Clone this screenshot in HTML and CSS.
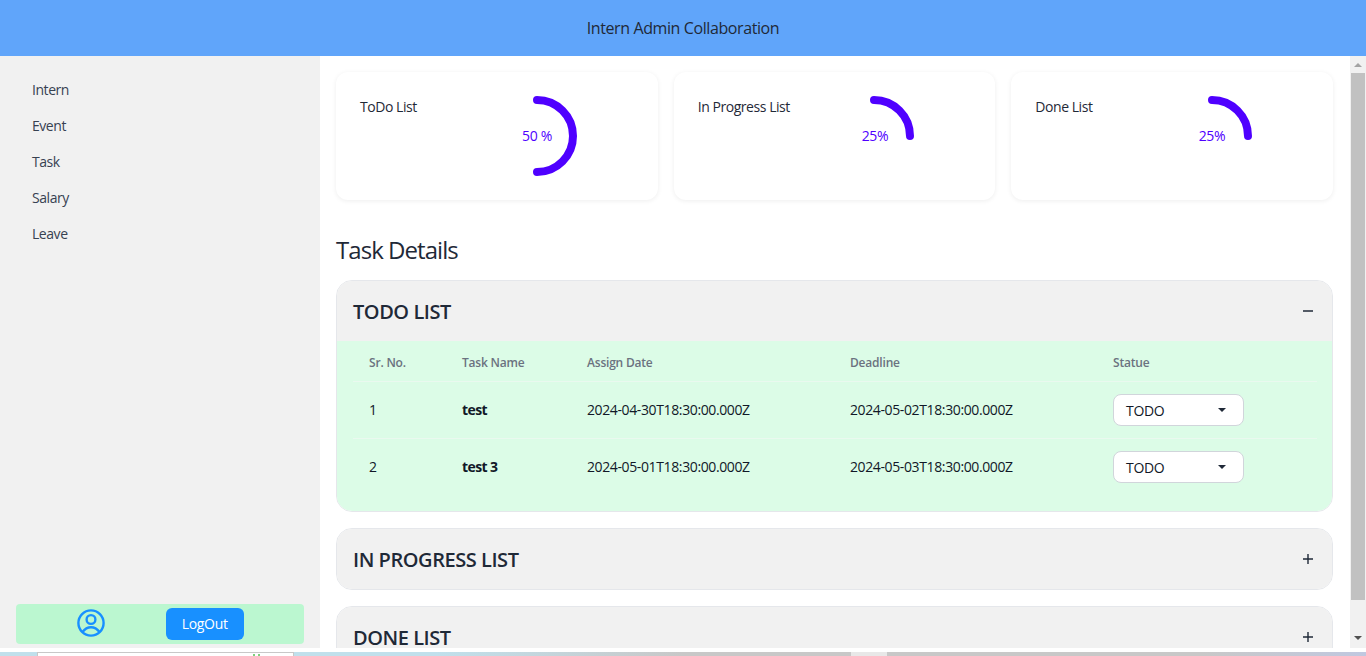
FILE: index.html
```html
<!DOCTYPE html>
<html lang="en">
<head>
  <meta charset="UTF-8">
  <title>Intern Admin Collaboration</title>
  <link rel="stylesheet" href="styles.css">
</head>
<body>

<header class="topbar">Intern Admin Collaboration</header>

<div class="shell">
  <aside class="sidebar">
    <nav class="side-nav">
      <a href="#">Intern</a>
      <a href="#">Event</a>
      <a href="#">Task</a>
      <a href="#">Salary</a>
      <a href="#">Leave</a>
    </nav>
    <div class="side-footer">
      <svg class="profile-icon" viewBox="0 0 28 28" fill="none" stroke="#1890ff" stroke-width="2.4">
        <circle cx="14" cy="14" r="12.6"/>
        <circle cx="14" cy="10.5" r="4.4"/>
        <path d="M5.5 23 C8 19.6 10.8 18.2 14 18.2 C17.2 18.2 20 19.6 22.5 23"/>
      </svg>
      <button class="logout">LogOut</button>
    </div>
  </aside>

  <main class="content">
    <section class="stats">
      <div class="stat-card">
        <div class="stat-label">ToDo List</div>
        <svg class="ring" viewBox="0 0 88 88" fill="none">
          <path d="M44 8 A36 36 0 0 1 44 80"/>
          <text x="44" y="49" text-anchor="middle">50 %</text>
        </svg>
      </div>
      <div class="stat-card">
        <div class="stat-label">In Progress List</div>
        <svg class="ring" viewBox="0 0 88 88" fill="none">
          <path d="M44 8 A36 36 0 0 1 80 44"/>
          <text x="45" y="49" text-anchor="middle">25%</text>
        </svg>
      </div>
      <div class="stat-card">
        <div class="stat-label">Done List</div>
        <svg class="ring" viewBox="0 0 88 88" fill="none">
          <path d="M44 8 A36 36 0 0 1 80 44"/>
          <text x="44" y="49" text-anchor="middle">25%</text>
        </svg>
      </div>
    </section>

    <h2 class="section-title">Task Details</h2>

    <section class="panel">
      <div class="panel-head">
        <span>TODO LIST</span>
        <svg class="toggle" viewBox="0 0 12 12"><path d="M1 6H11"/></svg>
      </div>
      <div class="panel-body">
        <table class="task-table">
          <thead>
            <tr>
              <th>Sr. No.</th>
              <th>Task Name</th>
              <th>Assign Date</th>
              <th>Deadline</th>
              <th>Statue</th>
            </tr>
          </thead>
          <tbody>
            <tr>
              <td>1</td>
              <td class="task-name">test</td>
              <td>2024-04-30T18:30:00.000Z</td>
              <td>2024-05-02T18:30:00.000Z</td>
              <td><div class="status-select">TODO<span class="caret"></span></div></td>
            </tr>
            <tr>
              <td>2</td>
              <td class="task-name">test 3</td>
              <td>2024-05-01T18:30:00.000Z</td>
              <td>2024-05-03T18:30:00.000Z</td>
              <td><div class="status-select">TODO<span class="caret"></span></div></td>
            </tr>
          </tbody>
        </table>
      </div>
    </section>

    <section class="panel">
      <div class="panel-head">
        <span>IN PROGRESS LIST</span>
        <svg class="toggle" viewBox="0 0 12 12"><path d="M1 6H11M6 1V11"/></svg>
      </div>
    </section>

    <section class="panel">
      <div class="panel-head">
        <span>DONE LIST</span>
        <svg class="toggle" viewBox="0 0 12 12"><path d="M1 6H11M6 1V11"/></svg>
      </div>
    </section>
  </main>

  <div class="scrollbar">
    <span class="arrow-up"></span>
    <div class="thumb"></div>
    <span class="arrow-down"></span>
  </div>
</div>

<div class="strip-gap"></div>
<div class="strip">
  <div class="strip-window"><i></i><i></i></div>
  <div class="strip-tab"></div>
</div>

</body>
</html>
```

FILE: styles.css
```css
* {
  margin: 0;
  padding: 0;
  box-sizing: border-box;
}

html, body {
  height: 656px;
  overflow: hidden;
}

body {
  font-family: "Open Sans", "Noto Sans", sans-serif;
  font-size: 14px;
  color: #111827;
  background: #fff;
  display: flex;
  flex-direction: column;
}

.topbar {
  height: 56px;
  flex: none;
  background: #60a5fa;
  color: #1f2937;
  font-size: 16px;
  letter-spacing: -0.4px;
  display: flex;
  align-items: center;
  justify-content: center;
}

.shell {
  height: 592px;
  flex: none;
  display: flex;
}

.sidebar {
  width: 320px;
  flex: none;
  background: #f1f1f1;
  padding: 15px 16px 4px;
  display: flex;
  flex-direction: column;
  justify-content: space-between;
}

.side-nav {
  display: flex;
  flex-direction: column;
  padding-left: 16px;
}

.side-nav a {
  height: 36px;
  display: flex;
  align-items: center;
  color: #374151;
  text-decoration: none;
  letter-spacing: -0.45px;
}

.side-footer {
  height: 40px;
  background: #bbf7d0;
  border-radius: 4px;
  padding-left: 1px;
  display: flex;
  align-items: center;
  justify-content: space-evenly;
}

.profile-icon {
  width: 28px;
  height: 28px;
  margin-bottom: 2px;
}

.logout {
  width: 78px;
  height: 32px;
  border: none;
  border-radius: 6px;
  padding-bottom: 2px;
  background: #1890ff;
  color: #fff;
  font-family: inherit;
  font-size: 14px;
  font-weight: 500;
  letter-spacing: -0.3px;
}

.content {
  flex: 1;
  overflow: hidden;
  padding: 16px;
}

.stats {
  display: flex;
  gap: 16px;
  width: 997px;
}

.stat-card {
  flex: 1;
  height: 128px;
  background: #fff;
  border-radius: 12px;
  box-shadow: 0 1px 5px rgba(0, 0, 0, 0.07);
  padding: 20px 24px;
  display: grid;
  grid-template-columns: 133px 88px;
}

.stat-card:nth-child(2) .ring {
  margin-left: -1px;
}

.stat-label {
  padding-top: 5px;
  color: #1f2937;
  line-height: 20px;
  letter-spacing: -0.45px;
}

.ring {
  width: 88px;
  height: 88px;
}

.ring path {
  stroke: #4f00ff;
  stroke-width: 8;
  stroke-linecap: round;
}

.ring text {
  fill: #4f00ff;
  font-size: 14px;
  letter-spacing: -0.3px;
}

.section-title {
  font-size: 24px;
  font-weight: 400;
  line-height: 32px;
  color: #1f2937;
  margin-top: 34px;
  margin-bottom: 14px;
  letter-spacing: -0.95px;
}

.panel {
  width: 997px;
  border: 1px solid #e5e7eb;
  border-radius: 16px;
  overflow: hidden;
  margin-bottom: 16px;
}

.panel-head {
  height: 60px;
  background: #f1f1f1;
  padding: 0 16px;
  display: flex;
  align-items: center;
  justify-content: space-between;
  font-size: 20px;
  font-weight: 600;
  color: #1f2937;
  letter-spacing: -0.45px;
}

.toggle {
  width: 12px;
  height: 12px;
  margin-right: 2px;
  fill: none;
  stroke: #1f2937;
  stroke-width: 1.4;
}

.panel-body {
  background: #dcfce7;
  padding: 0 16px 16px;
}

.task-table {
  width: 964px;
  table-layout: fixed;
  border-collapse: collapse;
}

.task-table th,
.task-table td {
  padding-left: 16px;
  text-align: left;
}

.task-table th {
  height: 40px;
  padding-top: 3px;
  font-size: 12px;
  font-weight: 600;
  color: #6b7280;
  letter-spacing: -0.2px;
}

.task-table th:nth-child(1) { width: 93px; }
.task-table th:nth-child(2) { width: 125px; }
.task-table th:nth-child(3) { width: 263px; }
.task-table th:nth-child(4) { width: 263px; }
.task-table th:nth-child(5) { width: 220px; }

.task-table td {
  height: 57px;
  border-top: 1px solid #eaf9ef;
  letter-spacing: -0.38px;
}

.task-table td.task-name {
  font-weight: 700;
  letter-spacing: -0.6px;
}

.status-select {
  width: 131px;
  height: 32px;
  background: #fff;
  border: 1px solid #d1d5db;
  border-radius: 8px;
  padding: 1px 15px 0 12px;
  display: flex;
  align-items: center;
  justify-content: space-between;
  letter-spacing: -0.3px;
}

.caret {
  width: 0;
  height: 0;
  border-left: 4px solid transparent;
  border-right: 4px solid transparent;
  border-top: 4px solid #1f2937;
  margin-right: 2px;
}

.scrollbar {
  width: 16px;
  flex: none;
  background: #f1f1f1;
  display: flex;
  flex-direction: column;
  align-items: center;
}

.arrow-up,
.arrow-down {
  width: 0;
  height: 0;
  border-left: 4px solid transparent;
  border-right: 4px solid transparent;
  flex: none;
}

.arrow-up {
  border-bottom: 4px solid #a3a3a3;
  margin-top: 7px;
  margin-bottom: 6px;
}

.arrow-down {
  border-top: 4px solid #505050;
  margin-top: 36px;
}

.thumb {
  width: 14px;
  height: 527px;
  flex: none;
  background: #c1c1c1;
}

.strip-gap {
  height: 4px;
  flex: none;
  background: #fff;
}

.strip {
  height: 4px;
  flex: none;
  background: linear-gradient(90deg, #c0e0ec 0%, #c0e0ec 32%, #c8c8c8 50%, #c8c8c8 88%, #c0c8e0 100%);
  display: flex;
}

.strip-window {
  width: 257px;
  margin-left: 37px;
  background: #fff;
  border: 1px solid #c8c8c8;
  border-bottom: none;
  display: flex;
  align-items: flex-end;
  gap: 3px;
  padding-left: 215px;
}

.strip-window i {
  width: 2px;
  height: 2px;
  background: #7ed07e;
}

.strip-tab {
  width: 36px;
  margin-left: 557px;
  background: #e8e8e8;
}
```
